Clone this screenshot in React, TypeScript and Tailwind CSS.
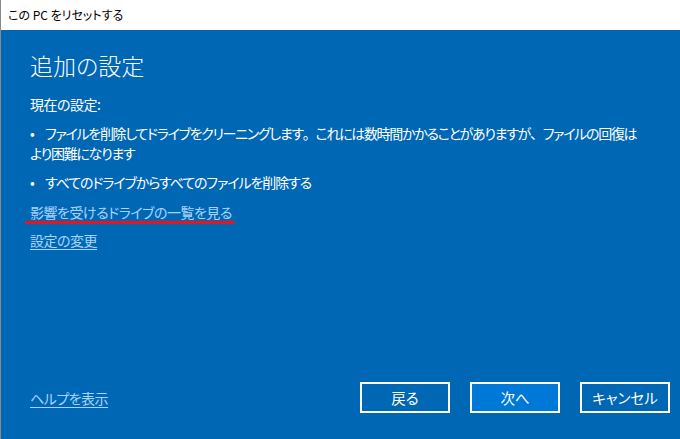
import React from "react";

const font = "font-['Noto_Sans_CJK_JP','Noto_Sans',sans-serif] [font-feature-settings:'palt']";
const body = "text-[14px] tracking-[-0.5px] leading-[20px]";
const link = `${body} text-[#a8d4ff] underline underline-offset-[3px] decoration-1 w-fit`;
const fw = "[font-feature-settings:normal]";

function Bullet() {
  return <span className="inline-block w-[15px]">•</span>;
}

export default function App() {
  return (
    <div className={`w-[680px] h-[439px] flex flex-col border-l border-[#8a8a8a] overflow-hidden ${font}`}>
      <div className="h-[30px] shrink-0 bg-white flex items-center pl-[7px] text-[12px] text-black">
        この PC をリセットする
      </div>
      <div className="flex-1 bg-[#0067b4] text-white flex flex-col pl-[29px] pr-[10px] relative">
        <div className="mt-[19px] text-[23px] font-light leading-[32px]">追加の設定</div>
        <div className={`mt-[13px] ${body}`}>現在の設定:</div>
        <div className={`mt-[9px] ${body} tracking-[-1.3px] whitespace-nowrap`}>
          <Bullet />
          ファイルを削除してドライブをクリーニングします<span className={fw}>。</span>これには数時間かかることがありますが<span className={fw}>、</span>ファイルの回復は
          <br />
          より困難になります
        </div>
        <div className={`mt-[9px] ${body} tracking-[-1.1px]`}>
          <Bullet />
          すべてのドライブからすべてのファイルを削除する
        </div>
        <div className={`mt-[10px] ${link}`}>影響を受けるドライブの一覧を見る</div>
        <div className={`mt-[8px] ${link}`}>設定の変更</div>
        <div className="absolute left-[24px] top-[191px] w-[210px] h-[3px] rounded-full bg-[#e8141e]" />
        <div className="mt-auto mb-[26px] flex items-center">
          <div className={link}>ヘルプを表示</div>
          <div className="ml-auto flex gap-[20px]">
            <button className="w-[90px] h-[31px] border-2 border-white text-[14.5px] text-white flex items-center justify-center">戻る</button>
            <button className="w-[90px] h-[31px] border-2 border-white bg-[#0078d7] text-[14.5px] text-white flex items-center justify-center">次へ</button>
            <button className="w-[90px] h-[31px] border-2 border-white text-[14.5px] text-white flex items-center justify-center">キャンセル</button>
          </div>
        </div>
      </div>
    </div>
  );
}
